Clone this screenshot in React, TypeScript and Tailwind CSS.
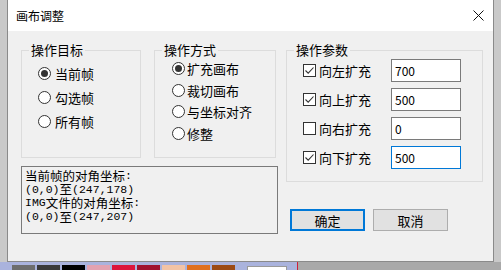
import React from "react";

// Canvas adjust dialog (画布调整) — Win10 style

const FONT = { fontFamily: '"Noto Sans CJK SC", "Noto Sans", sans-serif' };

function Radio({ label, checked, gap }: { label: string; checked?: boolean; gap: string }) {
  return (
    <div className={`flex items-center ${gap}`}>
      <div className="w-[13px] h-[13px] rounded-full border border-[#333333] bg-white flex items-center justify-center shrink-0">
        {checked && <div className="w-[7px] h-[7px] rounded-full bg-[#333333]" />}
      </div>
      <span className="text-[13px] leading-none text-black">{label}</span>
    </div>
  );
}

function Check({ label, checked, value, focused }: { label: string; checked?: boolean; value: string; focused?: boolean }) {
  return (
    <div className="h-[23px] flex items-center">
      <div className="w-[13px] h-[13px] border border-[#333333] bg-white shrink-0 flex items-center justify-center">
        {checked && (
          <svg width="11" height="11" viewBox="0 0 11 11">
            <path d="M1.5 5.5 L4.2 8.2 L9.5 2.5" fill="none" stroke="#333333" strokeWidth="1.1" />
          </svg>
        )}
      </div>
      <span className="ml-[3px] w-[72px] text-[13px] leading-none text-black">{label}</span>
      <div
        className={`w-[70px] h-[23px] bg-white border flex items-center pl-[3px] text-[12px] text-black ${
          focused ? "border-[#0078d7]" : "border-[#7a7a7a]"
        }`}
      >
        {value}
      </div>
    </div>
  );
}

function Group({ title, className, children }: { title: string; className: string; children: React.ReactNode }) {
  return (
    <fieldset className={`border border-[#dcdcdc] px-[7px] ${className}`}>
      <legend className="px-[2px] text-[13px] leading-[16px] text-black">{title}</legend>
      {children}
    </fieldset>
  );
}

function InfoLine({ children }: { children: React.ReactNode }) {
  return <div className="h-[13.7px] flex items-center whitespace-nowrap">{children}</div>;
}

const swatches = ["#6d6d6d", "#3a3a3a", "#000000", "#e3a2b0", "#dc143c", "#a0122f", "#f2c3a5", "#e0701f", "#9c4a14"];

export default function App() {
  const mono = "font-['Liberation_Mono',monospace] text-[11.5px] leading-none";
  const cjk = "text-[12.5px] leading-none";
  return (
    <div className="w-[501px] h-[270px] bg-[#c9c9c9] flex flex-col overflow-hidden" style={FONT}>
      {/* Window */}
      <div className="ml-[7px] w-[487px] h-[262px] border border-t-0 border-[#8a8a8a] flex flex-col shrink-0">
        <div className="h-[31px] bg-white flex items-center justify-between pl-[8px] pr-[9px]">
          <span className="text-[12px] text-black">画布调整</span>
          <svg width="11" height="11" viewBox="0 0 11 11">
            <path d="M0.5 0.5 L10.5 10.5 M10.5 0.5 L0.5 10.5" stroke="#111" strokeWidth="1" />
          </svg>
        </div>

        <div className="flex-1 bg-[#f0f0f0] flex pl-[13px] pt-[11px] gap-[8px]">
          {/* Left column */}
          <div className="w-[257px] flex flex-col">
            <div className="flex gap-[13px]">
              <Group title="操作目标" className="w-[120px] h-[116px]">
                <div className="flex flex-col pt-[3px] pl-[9px]">
                  <div className="h-[24px] flex items-center"><Radio label="当前帧" checked gap="gap-[4px]" /></div>
                  <div className="h-[24px] flex items-center"><Radio label="勾选帧" gap="gap-[4px]" /></div>
                  <div className="h-[24px] flex items-center"><Radio label="所有帧" gap="gap-[4px]" /></div>
                </div>
              </Group>
              <Group title="操作方式" className="w-[122px] h-[116px]">
                <div className="flex flex-col pl-[10px]">
                  <div className="h-[21.5px] flex items-center"><Radio label="扩充画布" checked gap="gap-[2px]" /></div>
                  <div className="h-[21.5px] flex items-center"><Radio label="裁切画布" gap="gap-[2px]" /></div>
                  <div className="h-[21.5px] flex items-center"><Radio label="与坐标对齐" gap="gap-[2px]" /></div>
                  <div className="h-[21.5px] flex items-center"><Radio label="修整" gap="gap-[2px]" /></div>
                </div>
              </Group>
            </div>
            <div className="mt-[8px] w-[257px] h-[68px] border border-[#7a7a7a] pl-[3px] pt-[2px] text-black">
              <InfoLine>
                <span className={cjk}>当前帧的对角坐标</span><span className={mono}>:</span>
              </InfoLine>
              <InfoLine>
                <span className={mono}>(0,0)</span><span className={cjk}>至</span><span className={mono}>(247,178)</span>
              </InfoLine>
              <InfoLine>
                <span className={mono}>IMG</span><span className={cjk}>文件的对角坐标</span><span className={mono}>:</span>
              </InfoLine>
              <InfoLine>
                <span className={mono}>(0,0)</span><span className={cjk}>至</span><span className={mono}>(247,207)</span>
              </InfoLine>
            </div>
          </div>

          {/* Right column */}
          <div className="w-[197px] flex flex-col">
            <Group title="操作参数" className="w-[197px] h-[140px]">
              <div className="flex flex-col gap-[6px] pt-[1px] pl-[9px]">
                <Check label="向左扩充" checked value="700" />
                <Check label="向上扩充" checked value="500" />
                <Check label="向右扩充" value="0" />
                <Check label="向下扩充" checked value="500" focused />
              </div>
            </Group>
            <div className="mt-[27px] ml-[4px] flex gap-[8px]">
              <button className="w-[75px] h-[22px] bg-[#e1e1e1] border-2 border-[#0078d7] text-[13px] text-black leading-none">确定</button>
              <button className="w-[75px] h-[22px] bg-[#e1e1e1] border border-[#adadad] text-[13px] text-black leading-none">取消</button>
            </div>
          </div>
        </div>
      </div>

      {/* Background strip below window */}
      <div className="flex h-[8px]">
        <div className="w-[297px] bg-[#aab3dd] flex items-end pl-[12px] gap-[2px]">
          {swatches.map((c) => (
            <div key={c} className="w-[23px] h-[5px]" style={{ background: c }} />
          ))}
          <div className="ml-[10px] w-[40px] h-[4px] bg-white border border-b-0 border-[#9a9a9a]" />
        </div>
        <div className="w-[1px] bg-[#d0203a]" />
        <div className="flex-1 bg-[#a9a9a9]" />
      </div>
    </div>
  );
}
